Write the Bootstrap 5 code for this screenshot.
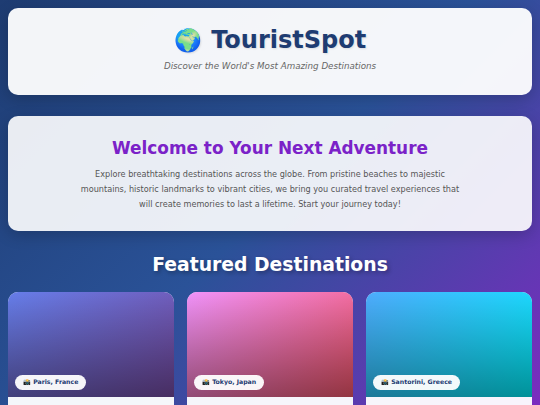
<!DOCTYPE html>
<html lang="en">
<head>
  <meta charset="UTF-8">
  <meta name="viewport" content="width=device-width, initial-scale=1.0">
  <title>TouristSpot</title>
  <link href="https://cdn.jsdelivr.net/npm/bootstrap@5.3.0/dist/css/bootstrap.min.css" rel="stylesheet">
  <script src="https://cdn.jsdelivr.net/npm/bootstrap@5.3.0/dist/js/bootstrap.bundle.min.js"></script>
  <style>
    body {
      font-family: "DejaVu Sans", sans-serif;
      background: linear-gradient(135deg, #1e3c72 0%, #2a5298 50%, #7b2cbf 100%) fixed;
      padding: 8px;
    }
    .site-head {
      height: 87px;
      padding-top: 18px;
      margin-bottom: 21px;
      border-radius: 10px;
      background: rgba(255, 255, 255, .95);
      box-shadow: 0 4px 16px rgba(0, 0, 0, .2);
    }
    .site-title {
      font-size: 24px;
      font-weight: 700;
      line-height: 29px;
      margin-bottom: 5px;
      color: #1e3c72;
      text-shadow: 1px 1px 2px rgba(0, 0, 0, .1);
    }
    .site-globe {
      font-size: 22.4px;
      margin-right: 1px;
    }
    .site-tag {
      font-size: 8.74px;
      font-style: italic;
      color: #666;
      margin: 0;
    }
    .welcome {
      height: 115px;
      padding: 22px 24px 0;
      margin-bottom: 23px;
      border-radius: 10px;
      background: rgba(255, 255, 255, .9);
      box-shadow: 0 4px 16px rgba(0, 0, 0, .2);
    }
    .welcome h2 {
      font-size: 16.9px;
      font-weight: 700;
      line-height: 1.2;
      color: #7b22c8;
      margin-bottom: 9px;
    }
    .welcome p {
      font-size: 8.15px;
      line-height: 15px;
      color: #555;
      max-width: 385px;
      margin: 0 auto;
    }
    .feat-title {
      font-size: 18.8px;
      font-weight: 700;
      line-height: 1.2;
      color: #fff;
      text-shadow: 2px 2px 4px rgba(0, 0, 0, .3);
      margin-bottom: 15px;
    }
    .spots {
      display: grid;
      grid-template-columns: repeat(3, 1fr);
      gap: 13px;
    }
    .spot {
      border-radius: 10px;
      overflow: hidden;
      background: rgba(255, 255, 255, .95);
    }
    .spot-img {
      height: 105px;
      padding: 0 0 7px 7px;
    }
    .paris { background: linear-gradient(transparent, rgba(0, 0, 0, .4)), linear-gradient(135deg, #667eea, #764ba2); }
    .tokyo { background: linear-gradient(transparent, rgba(0, 0, 0, .4)), linear-gradient(135deg, #f093fb, #f5576c); }
    .santorini { background: linear-gradient(transparent, rgba(0, 0, 0, .4)), linear-gradient(135deg, #4facfe, #00f2fe); }
    .spot-label {
      font-size: 6.2px;
      font-weight: 700;
      line-height: 14.5px;
      padding: 0 8px;
      border-radius: 20px;
      background: rgba(255, 255, 255, .95);
      color: #1e3c72;
    }
    .spot-body { height: 120px; }
  </style>
</head>
<body>
  <header class="site-head text-center">
    <h1 class="site-title"><span class="site-globe">🌍</span> TouristSpot</h1>
    <p class="site-tag">Discover the World's Most Amazing Destinations</p>
  </header>

  <section class="welcome text-center">
    <h2>Welcome to Your Next Adventure</h2>
    <p>Explore breathtaking destinations across the globe. From pristine beaches to majestic mountains, historic landmarks to vibrant cities, we bring you curated travel experiences that will create memories to last a lifetime. Start your journey today!</p>
  </section>

  <h2 class="feat-title text-center">Featured Destinations</h2>

  <div class="spots">
    <div class="spot">
      <div class="spot-img paris d-flex align-items-end"><span class="spot-label">📸 Paris, France</span></div>
      <div class="spot-body"></div>
    </div>
    <div class="spot">
      <div class="spot-img tokyo d-flex align-items-end"><span class="spot-label">📸 Tokyo, Japan</span></div>
      <div class="spot-body"></div>
    </div>
    <div class="spot">
      <div class="spot-img santorini d-flex align-items-end"><span class="spot-label">📸 Santorini, Greece</span></div>
      <div class="spot-body"></div>
    </div>
  </div>
</body>
</html>
